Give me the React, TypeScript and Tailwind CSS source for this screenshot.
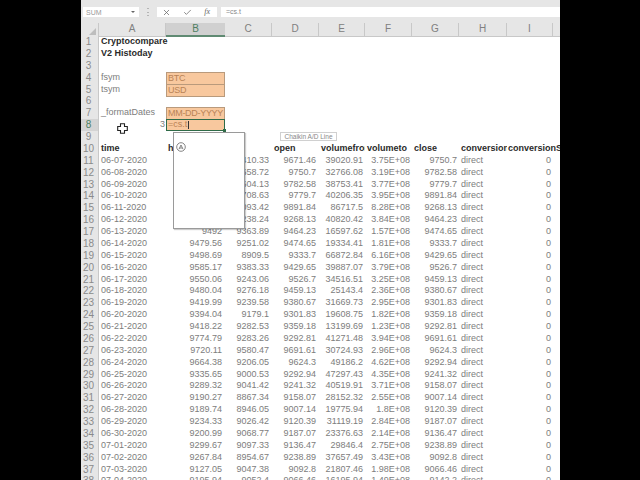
import { Check, X } from "lucide-react";

const gridCols = "grid grid-cols-[18px_67px_59px_47px_47px_46px_47px_47px_48px_46px_7px]";
const letters = ["A", "B", "C", "D", "E", "F", "G", "H", "I"];

// date, high, low, open, volumefrom, volumeto, close
const data = [
  ["06-07-2020", "", "9410.33", "9671.46", "39020.91", "3.75E+08", "9750.7"],
  ["06-08-2020", "", "9658.72", "9750.7", "32766.08", "3.19E+08", "9782.58"],
  ["06-09-2020", "", "9604.13", "9782.58", "38753.41", "3.77E+08", "9779.7"],
  ["06-10-2020", "", "9708.63", "9779.7", "40206.35", "3.95E+08", "9891.84"],
  ["06-11-2020", "", "9093.42", "9891.84", "86717.5", "8.28E+08", "9268.13"],
  ["06-12-2020", "", "9238.24", "9268.13", "40820.42", "3.84E+08", "9464.23"],
  ["06-13-2020", "9492", "9363.89", "9464.23", "16597.62", "1.57E+08", "9474.65"],
  ["06-14-2020", "9479.56", "9251.02", "9474.65", "19334.41", "1.81E+08", "9333.7"],
  ["06-15-2020", "9498.69", "8909.5", "9333.7", "66872.84", "6.16E+08", "9429.65"],
  ["06-16-2020", "9585.17", "9383.33", "9429.65", "39887.07", "3.79E+08", "9526.7"],
  ["06-17-2020", "9550.06", "9243.06", "9526.7", "34516.51", "3.25E+08", "9459.13"],
  ["06-18-2020", "9480.04", "9276.18", "9459.13", "25143.4", "2.36E+08", "9380.67"],
  ["06-19-2020", "9419.99", "9239.58", "9380.67", "31669.73", "2.95E+08", "9301.83"],
  ["06-20-2020", "9394.04", "9179.1", "9301.83", "19608.75", "1.82E+08", "9359.18"],
  ["06-21-2020", "9418.22", "9282.53", "9359.18", "13199.69", "1.23E+08", "9292.81"],
  ["06-22-2020", "9774.79", "9283.26", "9292.81", "41271.48", "3.94E+08", "9691.61"],
  ["06-23-2020", "9720.11", "9580.47", "9691.61", "30724.93", "2.96E+08", "9624.3"],
  ["06-24-2020", "9664.38", "9206.05", "9624.3", "49186.2", "4.62E+08", "9292.94"],
  ["06-25-2020", "9335.65", "9000.53", "9292.94", "47297.43", "4.35E+08", "9241.32"],
  ["06-26-2020", "9289.32", "9041.42", "9241.32", "40519.91", "3.71E+08", "9158.07"],
  ["06-27-2020", "9190.27", "8867.34", "9158.07", "28152.32", "2.55E+08", "9007.14"],
  ["06-28-2020", "9189.74", "8946.05", "9007.14", "19775.94", "1.8E+08", "9120.39"],
  ["06-29-2020", "9234.33", "9026.42", "9120.39", "31119.19", "2.84E+08", "9187.07"],
  ["06-30-2020", "9200.99", "9068.77", "9187.07", "23376.63", "2.14E+08", "9136.47"],
  ["07-01-2020", "9299.67", "9097.33", "9136.47", "29846.4", "2.75E+08", "9238.89"],
  ["07-02-2020", "9267.84", "8954.67", "9238.89", "37657.49", "3.43E+08", "9092.8"],
  ["07-03-2020", "9127.05", "9047.38", "9092.8", "21807.46", "1.98E+08", "9066.46"],
  ["07-04-2020", "9195.94", "9052.4", "9066.46", "16195.94", "1.49E+08", "9142.2"],
];

function RowHead({ n, active }: { n: number; active?: boolean }) {
  return (
    <div
      className={`border-r border-[#c8c8c8] pr-[2px] text-center text-[10px] ${
        active ? "bg-[#d4d4d4] text-[#4f7f63]" : "bg-[#e6e6e6] text-[#8a8a8a]"
      }`}
    >
      {n}
    </div>
  );
}

function Orange({ children }: { children: string }) {
  return (
    <div className="whitespace-nowrap border border-[#b99a7c] bg-[#f8c89e] pl-[1px] tracking-[-0.3px] text-[#b98356]">
      {children}
    </div>
  );
}

function Bold({ children }: { children: string }) {
  return <div className="overflow-hidden whitespace-nowrap pl-[2px] font-bold text-[#2a2a2a]">{children}</div>;
}

function Num({ children, wide }: { children: string; wide?: boolean }) {
  return <div className={`text-right ${wide ? "pr-[3px]" : "pr-[2px]"}`}>{children}</div>;
}

function Row({ n, active, children }: { n: number; active?: boolean; children?: React.ReactNode }) {
  return (
    <div className={`${gridCols} h-[11.875px] leading-[11.875px]`}>
      <RowHead n={n} active={active} />
      {children}
    </div>
  );
}

function Toolbar() {
  return (
    <div className="flex h-[23px] items-start bg-[#e6e6e6] pt-[7px]">
      <div className="ml-[2px] flex h-[10px] w-[56px] items-center justify-between bg-white pl-[3px] pr-[4px] text-[7px] leading-none text-[#999]">
        SUM
        <span className="h-0 w-0 border-x-[2px] border-t-[2px] border-x-transparent border-t-[#666]" />
      </div>
      <div className="ml-[8px] flex h-[10px] w-[2px] flex-col justify-between py-[1px]">
        <span className="h-[1px] w-[2px] bg-[#b5b5b5]" />
        <span className="h-[1px] w-[2px] bg-[#b5b5b5]" />
        <span className="h-[1px] w-[2px] bg-[#b5b5b5]" />
      </div>
      <div className="ml-[8px] flex h-[10px] w-[60px] items-center justify-between bg-white pl-[5px] pr-[7px] text-[#666]">
        <X size={9} />
        <Check size={9} />
        <span className="font-['Liberation_Serif',serif] text-[8px] italic leading-none">fx</span>
      </div>
      <div className="ml-[4px] h-[10px] flex-1 bg-white pl-[5px] text-[7px] leading-[10px] text-[#888]">=cs.t</div>
    </div>
  );
}

function CircledA() {
  return (
    <svg width="10" height="10" viewBox="0 0 10 10" fill="none" stroke="#666" strokeWidth="0.8">
      <circle cx="5" cy="5" r="4.3" />
      <path d="M3 7.2 5 3l2 4.2M3.7 6h2.6" />
    </svg>
  );
}

export default function App() {
  return (
    <div className="relative h-[480px] w-[640px] overflow-hidden bg-black pl-[81px] pr-[80px] font-['Liberation_Sans',Arial,sans-serif] text-[9px] text-[#7d7d7d]">
      <div className="h-full overflow-hidden bg-white">
        <Toolbar />

        {/* Column letters */}
        <div className={`${gridCols} h-[13px] bg-[#e6e6e6] text-center text-[10px] leading-[12px] text-[#808080]`}>
          <div className="flex items-end justify-end border-b border-r border-[#c8c8c8] pb-[1px] pr-[2px]">
            <span className="h-0 w-0 border-b-[7px] border-l-[7px] border-b-[#bdbdbd] border-l-transparent" />
          </div>
          {letters.map((l) => (
            <div
              key={l}
              className={
                l === "B"
                  ? "border-b-2 border-[#5f8a72] bg-[#d0d0d0] text-[#4f7f63]"
                  : "border-b border-r border-[#c8c8c8]"
              }
            >
              {l}
            </div>
          ))}
          <div className="border-b border-[#c8c8c8]" />
        </div>

        <Row n={1}>
          <div className="whitespace-nowrap pl-[2px] font-bold text-[#2a2a2a]">Cryptocompare</div>
        </Row>
        <Row n={2}>
          <Bold>V2 Histoday</Bold>
        </Row>
        <Row n={3} />
        <Row n={4}>
          <div className="pl-[2px]">fsym</div>
          <Orange>BTC</Orange>
        </Row>
        <Row n={5}>
          <div className="pl-[2px]">tsym</div>
          <Orange>USD</Orange>
        </Row>
        <Row n={6} />
        <Row n={7}>
          <div className="pl-[2px]">_formatDates</div>
          <Orange>MM-DD-YYYY</Orange>
        </Row>
        <Row n={8} active>
          <div className="pr-[1px] text-right">3</div>
          <div className="relative border-[1.5px] border-[#2f6b48] bg-[#f8c89e] pl-[1px] leading-[9px] text-[#b98356]">
            =cs.t<span className="ml-[1px] inline-block h-[8px] w-[1px] bg-[#333] align-middle" />
            <span className="absolute -bottom-[2px] -right-[2px] h-[3px] w-[3px] bg-[#2f6b48]" />
          </div>
        </Row>
        <Row n={9} />
        <Row n={10}>
          <Bold>time</Bold>
          <Bold>high</Bold>
          <Bold>low</Bold>
          <Bold>open</Bold>
          <Bold>volumefrom</Bold>
          <Bold>volumeto</Bold>
          <Bold>close</Bold>
          <Bold>conversionType</Bold>
          <div className="col-span-2 overflow-hidden whitespace-nowrap pl-[1px] font-bold text-[#2a2a2a]">
            conversionSymbol
          </div>
        </Row>

        {data.map((d, i) => (
          <Row key={d[0]} n={i + 11}>
            <div className="pl-[2px]">{d[0]}</div>
            <Num wide>{d[1]}</Num>
            <Num wide>{d[2]}</Num>
            <Num wide>{d[3]}</Num>
            <Num>{d[4]}</Num>
            <Num>{d[5]}</Num>
            <Num>{d[6]}</Num>
            <div className="pl-[2px]">direct</div>
            <Num>0</Num>
          </Row>
        ))}
      </div>

      {/* Function autocomplete list */}
      <div className="absolute left-[173px] top-[132px] h-[97px] w-[72px] border border-[#9a9a9a] bg-white pl-[2px] pt-[9px] shadow-[1px_1px_1px_rgba(0,0,0,0.2)]">
        <CircledA />
      </div>

      {/* Ribbon hover label */}
      <div className="absolute left-[280px] top-[132px] h-[9px] w-[57px] border border-[#d0d0d0] bg-white text-center text-[6.5px] leading-[7px] text-[#888]">
        Chaikin A/D Line
      </div>

      {/* Cell cursor */}
      <svg className="absolute left-[117px] top-[123px]" width="11" height="11" viewBox="0 0 11 11">
        <path
          d="M3.5.7h4v2.8h2.8v4H7.5v2.8h-4V7.5H.7v-4h2.8z"
          fill="#fff"
          stroke="#222"
          strokeWidth="1.1"
        />
      </svg>
    </div>
  );
}
